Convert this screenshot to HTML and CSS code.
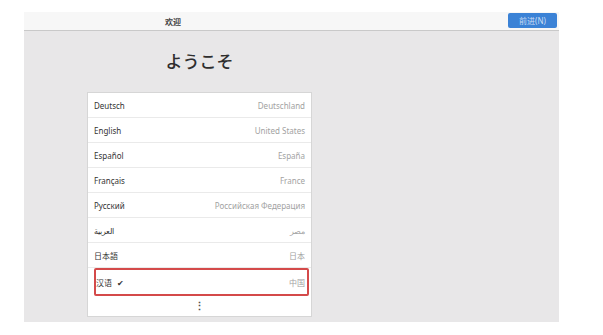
FILE: index.html
```html
<!DOCTYPE html>
<html>
<head>
    <title>欢迎</title>
    <link rel="stylesheet" href="styles.css">
</head>
<body>
    <div class="window">
        <div class="header">
            <span class="header-title">欢迎</span>
            <button class="btn-next">前进(N)</button>
        </div>
        <div class="content">
            <div class="column">
                <h1>ようこそ</h1>
                <div class="lang-list">
                    <div class="lang-row"><span class="lang">Deutsch</span><span class="region">Deutschland</span></div>
                    <div class="lang-row"><span class="lang">English</span><span class="region">United States</span></div>
                    <div class="lang-row"><span class="lang">Español</span><span class="region">España</span></div>
                    <div class="lang-row"><span class="lang">Français</span><span class="region">France</span></div>
                    <div class="lang-row"><span class="lang">Русский</span><span class="region">Российская Федерация</span></div>
                    <div class="lang-row"><span class="lang">العربية</span><span class="region">مصر</span></div>
                    <div class="lang-row"><span class="lang">日本語</span><span class="region">日本</span></div>
                    <div class="lang-row selected"><span class="lang">汉语 <span class="check">✔</span></span><span class="region">中国</span></div>
                    <div class="lang-more">⋮</div>
                </div>
            </div>
        </div>
    </div>
</body>
</html>
```

FILE: styles.css
```css
* {
    margin: 0;
    padding: 0;
    box-sizing: border-box;
    font-family: 'Noto Sans', 'Noto Sans CJK SC', sans-serif;
}

body {
    background: #fff;
    padding: 12px 0 0 24px;
}

.window {
    width: 535px;
    height: 310px;
    background: #e8e7e8;
    display: flex;
    flex-direction: column;
}

.header {
    height: 19px;
    background: #f7f7f7;
    border-bottom: 1px solid #c9c9c9;
    display: flex;
    align-items: center;
    padding-left: 141px;
    padding-right: 2px;
}

.header-title {
    font-size: 8px;
    font-weight: 700;
    color: #444;
    flex: 1;
}

.btn-next {
    background: #3b82d6;
    color: #c9dcf3;
    border: none;
    border-radius: 2px;
    font-size: 8px;
    width: 49px;
    height: 15px;
    margin-top: 1px;
    align-self: flex-start;
}

.content {
    padding-left: 63px;
}

.column {
    width: 225px;
}

h1 {
    text-align: center;
    font-size: 17px;
    font-weight: 500;
    color: #2e2e2e;
    margin-top: 17px;
    height: 44px;
    font-family: 'Noto Sans CJK JP', sans-serif;
}

.lang-list {
    background: #fff;
    border: 1px solid #d6d6d6;
}

.lang-row {
    height: 25px;
    display: flex;
    justify-content: space-between;
    align-items: center;
    padding: 0 6px;
    border-bottom: 1px solid #eaeaea;
    font-size: 8px;
}

.lang {
    color: #333;
}

.region {
    color: #a2a2a2;
}

.selected {
    border: 2px solid #d44a4a;
    border-radius: 2px;
    margin: 0 2px 0 6px;
    padding: 0 2px 0 0;
    height: 28px;
}

.check {
    font-size: 8px;
    margin-left: 3px;
}

.lang-more {
    height: 20px;
    text-align: center;
    font-size: 11px;
    line-height: 20px;
    color: #555;
    font-weight: 700;
}
```
